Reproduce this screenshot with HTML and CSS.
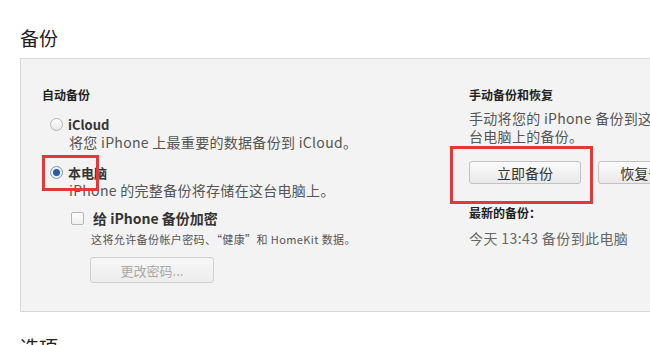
FILE: index.html
```html
<!DOCTYPE html>
<html>
  <head>
    <meta charset="UTF-8" />
    <link rel="stylesheet" href="styles.css">
  </head>
  <body>
    <div class="page">
      <div class="section-title">备份</div>
      <div class="panel">
        <div class="col col-auto">
          <div class="col-title">自动备份</div>
          <div class="option">
            <span class="radio"></span>
            <span class="option-label">iCloud</span>
          </div>
          <div class="option-desc">将您 iPhone 上最重要的数据备份到 iCloud。</div>
          <div class="option option-local">
            <span class="radio radio-on"></span>
            <span class="option-label">本电脑</span>
          </div>
          <div class="option-desc">iPhone 的完整备份将存储在这台电脑上。</div>
          <div class="encrypt">
            <div class="option">
              <span class="check"></span>
              <span class="option-label">给 iPhone 备份加密</span>
            </div>
            <div class="small-desc">这将允许备份帐户密码、“健康”和 HomeKit 数据。</div>
            <button class="btn btn-disabled btn-pwd">更改密码...</button>
          </div>
        </div>
        <div class="col col-manual">
          <div class="col-title">手动备份和恢复</div>
          <div class="manual-desc">手动将您的 iPhone 备份到这台电脑或从这<br>台电脑上的备份。</div>
          <div class="btn-row">
            <button class="btn btn-now">立即备份</button>
            <button class="btn btn-restore">恢复备份...</button>
          </div>
          <div class="col-title latest-title">最新的备份：</div>
          <div class="latest">今天 13:43 备份到此电脑</div>
        </div>
        <!-- 标注框 -->
        <div class="mark mark-local"></div>
        <div class="mark mark-now"></div>
      </div>
      <div class="section-title section-next">选项</div>
    </div>
  </body>
</html>
```

FILE: styles.css
```css
* {
  margin: 0;
  padding: 0;
  box-sizing: border-box;
}
html, body {
  height: 100%;
  background: #fff;
  overflow: hidden;
}
body {
  font-family: "Noto Sans CJK SC", "Noto Sans", sans-serif;
  color: #333;
}
.page {
  padding: 26px 0 0 20px;
  width: 900px;
}
.section-title {
  font-size: 19px;
  line-height: 24px;
  color: #222;
}
.section-next {
  margin-top: 23px;
}
.panel {
  position: relative;
  margin-top: 8px;
  display: flex;
  height: 254px;
  padding: 28px 0 0 21px;
  background: #f3f3f3;
  border: 1px solid #d8d8d8;
}
.col-auto {
  width: 427px;
}
.col-title {
  font-size: 12px;
  line-height: 16px;
  font-weight: bold;
  color: #222;
}
.option {
  display: flex;
  align-items: center;
  margin-top: 12px;
  height: 18px;
}
.option-local {
  margin-top: 11px;
}
.option-label {
  font-size: 13px;
  font-weight: bold;
  color: #333;
}
.radio {
  width: 13px;
  height: 13px;
  border-radius: 50%;
  border: 1px solid #b4b4b4;
  background: linear-gradient(#fdfdfd, #e8e8e8);
  margin: 0 5px 0 8px;
  display: flex;
  align-items: center;
  justify-content: center;
}
.radio-on {
  border-color: #7b97bd;
  background: #e9f0f8;
}
.radio-on::after {
  content: "";
  width: 7px;
  height: 7px;
  border-radius: 50%;
  background: #2d5a9a;
}
.option-desc {
  padding-left: 27px;
  font-size: 14px;
  line-height: 19px;
  letter-spacing: 0.3px;
  color: #555;
}
.encrypt {
  padding-left: 29px;
}
.encrypt .option {
  margin-top: 9px;
}
.encrypt .option-label {
  font-size: 14px;
}
.check {
  width: 13px;
  height: 13px;
  border: 1px solid #b5b5b5;
  border-radius: 2px;
  background: linear-gradient(#fefefe, #efefef);
  margin-right: 9px;
}
.small-desc {
  padding-left: 20px;
  font-size: 11px;
  line-height: 16px;
  letter-spacing: 0.4px;
  color: #555;
  margin-top: 4px;
}
.btn {
  font-family: inherit;
  font-size: 13px;
  color: #333;
  border: 1px solid #c2c2c2;
  border-radius: 3px;
  background: linear-gradient(#fbfbfb, #e9e9e9);
}
.btn-pwd {
  margin: 10px 0 0 19px;
  width: 124px;
  height: 26px;
}
.btn-disabled {
  color: #a8a8a8;
  background: linear-gradient(#f7f7f7, #ededed);
  border-color: #d0d0d0;
}
.manual-desc {
  margin-top: 6px;
  font-size: 14px;
  line-height: 18px;
  letter-spacing: 0.3px;
  color: #555;
  white-space: nowrap;
}
.btn-row {
  display: flex;
  gap: 17px;
  margin-top: 16px;
}
.btn-now {
  width: 112px;
  height: 23px;
  font-size: 14px;
}
.btn-restore {
  width: 112px;
  height: 23px;
  font-size: 14px;
}
.latest-title {
  margin-top: 21px;
}
.latest {
  margin-top: 8px;
  font-size: 14px;
  line-height: 18px;
  letter-spacing: 0.4px;
  color: #666;
}
.mark {
  position: absolute;
  border: 3px solid #e2383a;
}
.mark-local {
  left: 21px;
  top: 96px;
  width: 57px;
  height: 36px;
}
.mark-now {
  left: 429px;
  top: 87px;
  width: 143px;
  height: 58px;
}
```
